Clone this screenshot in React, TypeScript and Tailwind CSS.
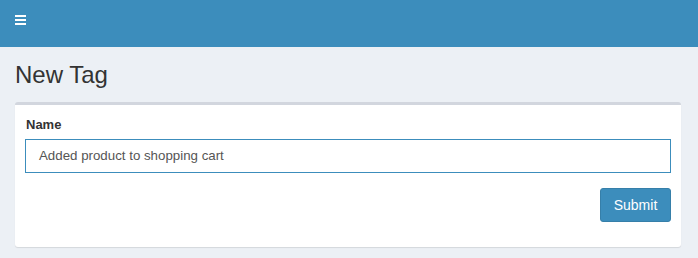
export default function App() {
  return (
    <div className="min-h-[258px] bg-[#ecf0f5] text-[#333]" style={{ fontFamily: '"Liberation Sans", Arial, sans-serif' }}>
      <header className="h-[47px] bg-[#3c8dbc] flex items-start pl-[15px] pt-[15px]">
        <svg width="11" height="10" viewBox="0 0 11 10" className="block">
          <rect x="0" y="0" width="11" height="2" fill="#fff" />
          <rect x="0" y="4" width="11" height="2" fill="#fff" />
          <rect x="0" y="8" width="11" height="2" fill="#fff" />
        </svg>
      </header>
      <div className="pt-[15px] pl-[15px] pr-[17px]">
        <h1 className="m-0 text-[24px] leading-[25px] font-normal text-[#333]">New Tag</h1>
        <div className="mt-[15px] bg-white border-t-[3px] border-[#d2d6de] rounded-[3px] shadow-[0_1px_1px_rgba(0,0,0,0.1)] p-[10px]">
          <label className="block text-[13px] leading-[20px] font-bold mb-[4px] pl-[1px]">Name</label>
          <div className="h-[34px] border border-[#3c8dbc] flex items-center pl-[13px] pr-[12px] text-[13.3px] text-[#555]">
            Added product to shopping cart
          </div>
          <div className="flex justify-end mt-[15px] mb-[15px]">
            <button className="h-[34px] w-[71px] bg-[#3c8dbc] border border-[#367fa9] rounded-[3px] text-white text-[14px] leading-[20px]">
              Submit
            </button>
          </div>
        </div>
      </div>
    </div>
  );
}
